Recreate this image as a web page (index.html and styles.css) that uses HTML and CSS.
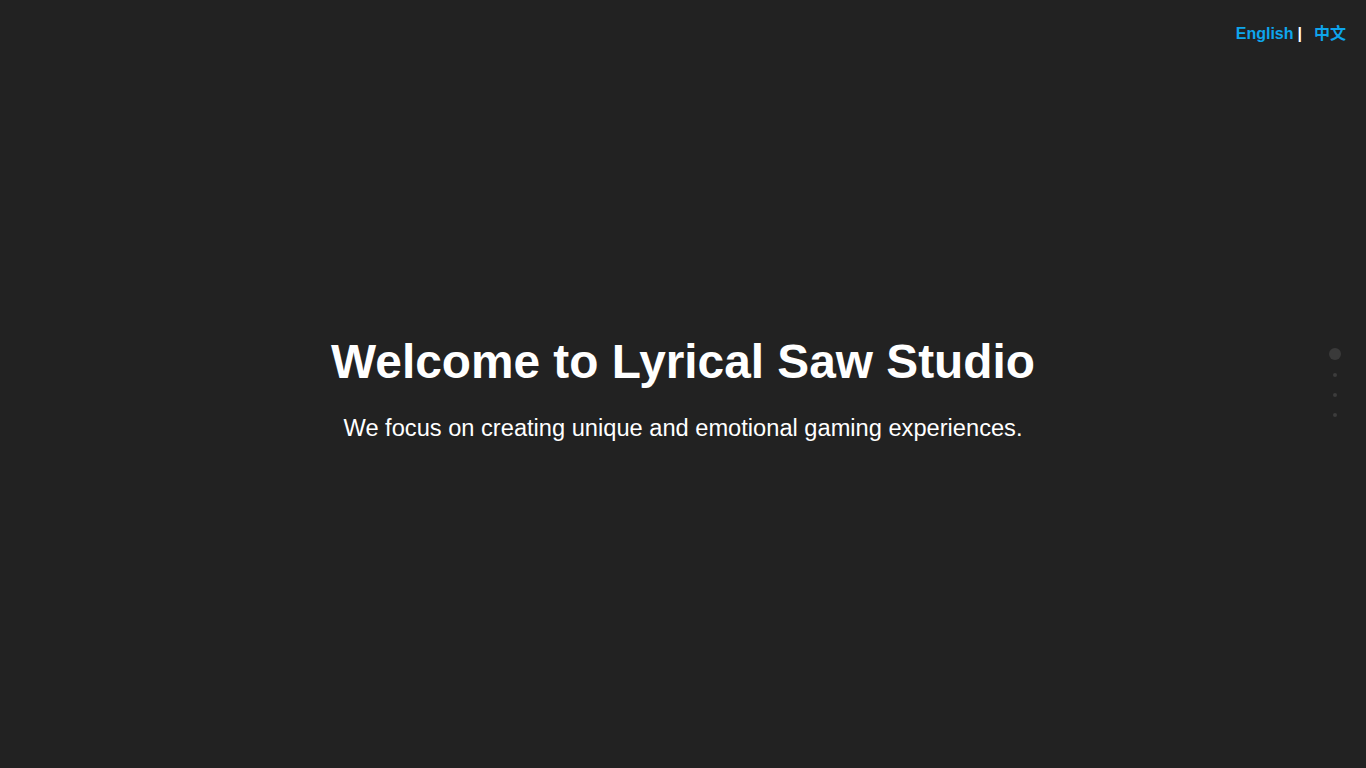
FILE: index.html
```html
<!DOCTYPE html>
<html lang="en">
<head>
<meta charset="utf-8">
<title>Lyrical Saw Studio</title>
<link rel="stylesheet" href="styles.css">
</head>
<body>
<div class="lang">
  <a class="lang-link" href="#">English</a><span class="sep">|</span><a class="lang-link zh" href="#">中文</a>
</div>
<main class="hero">
  <div class="hero-inner">
    <h1 class="title">Welcome to Lyrical Saw Studio</h1>
    <p class="subtitle">We focus on creating unique and emotional gaming experiences.</p>
  </div>
</main>
<nav class="dots">
  <span class="dot active"></span>
  <span class="dot"></span>
  <span class="dot"></span>
  <span class="dot"></span>
</nav>
</body>
</html>
```
FILE: styles.css
```css
html, body {
  margin: 0;
  padding: 0;
  height: 100%;
  background: #222222;
  font-family: "Liberation Sans", Arial, sans-serif;
  color: #ffffff;
  overflow: hidden;
}
.lang {
  position: absolute;
  top: 24px;
  right: 20px;
  font-size: 16px;
  font-weight: bold;
  line-height: 20px;
  display: flex;
  align-items: center;
}
.lang-link {
  color: #0ea5ec;
  text-decoration: none;
}
.lang-link.zh {
  font-family: "Liberation Sans", "Noto Sans CJK SC", sans-serif;
  margin-left: 12px;
}
.sep {
  color: #ffffff;
  margin-left: 4px;
}
.hero {
  height: 100%;
  display: flex;
  align-items: center;
  justify-content: center;
  text-align: center;
}
.hero-inner {
  padding-top: 8px;
}
.title {
  margin: 0;
  font-size: 47.8px;
  line-height: 56px;
  font-weight: bold;
}
.subtitle {
  margin: 24px 0 0;
  font-size: 23.65px;
  line-height: 28px;
}
.dots {
  position: absolute;
  right: 25px;
  top: 348px;
  width: 12px;
  display: flex;
  flex-direction: column;
  align-items: center;
  gap: 16px;
}
.dot {
  width: 4px;
  height: 4px;
  border-radius: 50%;
  background: #3c3c3c;
}
.dot.active {
  width: 12px;
  height: 12px;
  background: #3a3a3a;
  margin-bottom: -3px;
}
```
